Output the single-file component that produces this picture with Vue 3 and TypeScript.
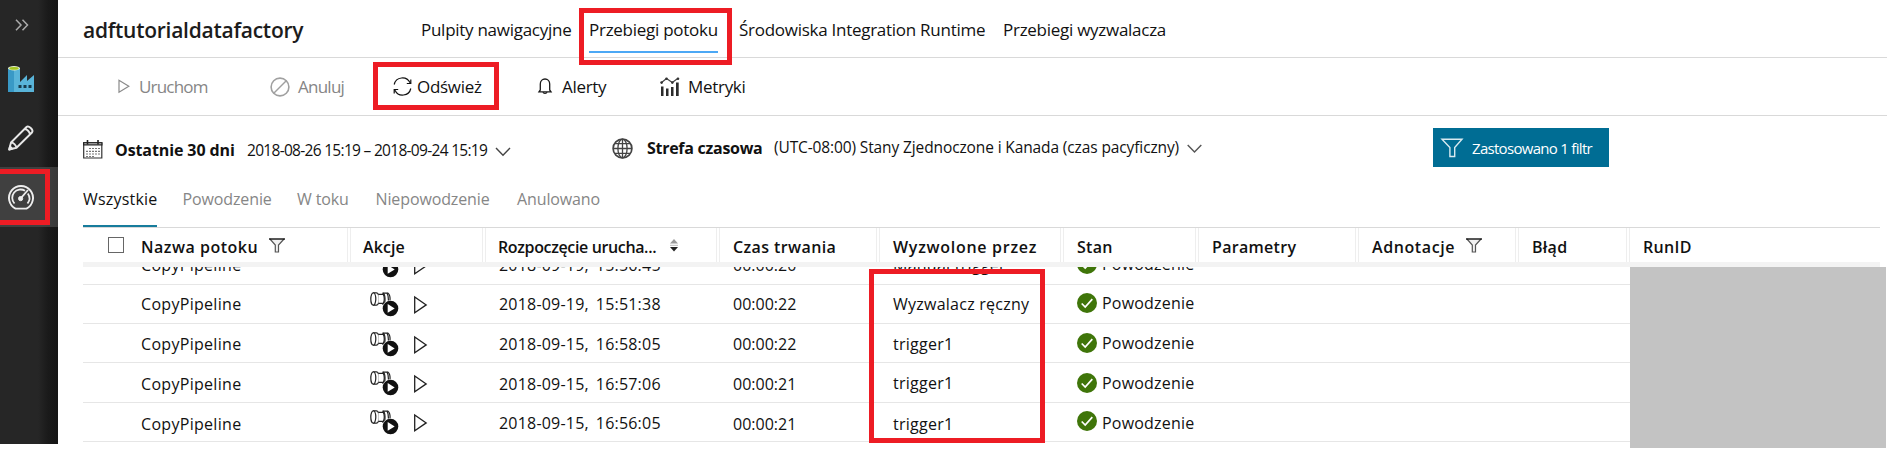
<script setup lang="ts">
interface Column { key: string; label: string; filter?: boolean; sort?: boolean }
interface Run { id: number; date: string; time: string; duration: string; trigger: string }

const navItems = [
  { key: 'dash', label: 'Pulpity nawigacyjne' },
  { key: 'runs', label: 'Przebiegi potoku' },
  { key: 'env', label: 'Środowiska Integration Runtime' },
  { key: 'trig', label: 'Przebiegi wyzwalacza' },
]
const tabs = [
  { key: 'all', label: 'Wszystkie' },
  { key: 'ok', label: 'Powodzenie' },
  { key: 'progress', label: 'W toku' },
  { key: 'failed', label: 'Niepowodzenie' },
  { key: 'cancelled', label: 'Anulowano' },
]
const columns: Column[] = [
  { key: 'name', label: 'Nazwa potoku', filter: true },
  { key: 'actions', label: 'Akcje' },
  { key: 'start', label: 'Rozpoczęcie urucha...', sort: true },
  { key: 'duration', label: 'Czas trwania' },
  { key: 'trigger', label: 'Wyzwolone przez' },
  { key: 'state', label: 'Stan' },
  { key: 'params', label: 'Parametry' },
  { key: 'notes', label: 'Adnotacje', filter: true },
  { key: 'error', label: 'Błąd' },
  { key: 'runid', label: 'RunID' },
]
const runs: Run[] = [
  { id: 0, date: '2018-09-19,', time: '15:56:45', duration: '00:00:20', trigger: 'Manual trigger' },
  { id: 1, date: '2018-09-19,', time: '15:51:38', duration: '00:00:22', trigger: 'Wyzwalacz ręczny' },
  { id: 2, date: '2018-09-15,', time: '16:58:05', duration: '00:00:22', trigger: 'trigger1' },
  { id: 3, date: '2018-09-15,', time: '16:57:06', duration: '00:00:21', trigger: 'trigger1' },
  { id: 4, date: '2018-09-15,', time: '16:56:05', duration: '00:00:21', trigger: 'trigger1' },
]
</script>

<template>
  <div class="app">
    <aside class="sidebar">
      <div class="side-item expand">
        <svg width="14" height="12" viewBox="0 0 14 12"><path d="M1 .8 6 6l-5 5.2M7.500 .8l5 5.200-5 5.200" fill="none" stroke="#aaa" stroke-width="1.500" /></svg>
      </div>
      <div class="side-item factory">
        <svg width="26" height="26" viewBox="0 0 26 26">
          <path d="M0 2h12v24H0z" fill="#3999c6" />
          <path d="M6 2h6v14l7-7v6l7-6v17H6z" fill="#59b4d9" />
          <ellipse cx="6" cy="2.200" rx="6" ry="2.200" fill="#e8f2d0" />
          <ellipse cx="6" cy="2.400" rx="4.700" ry="1.400" fill="#a3c520" />
          <path d="M10.500 19h3v3h-3zM15.500 19h3v3h-3zM20.500 19h3v3h-3z" fill="#173a4c" />
        </svg>
      </div>
      <div class="side-item pencil">
        <svg width="26" height="26" viewBox="0 0 26 26" fill="none" stroke="#e8e8e8" stroke-width="1.900" stroke-linejoin="round">
          <path d="M1.200 24.500 3 17.500 18.500 2c2-2 7.500 2.800 5.500 5.500L8.500 22.800zM3 17.500c2.500 0 5 2.500 5.500 5.300M16.500 4c2.500 0 5.200 2.800 5.500 5.300" />
          <path d="M1.200 24.500l.8-3 2.200 2.200z" fill="#e8e8e8" />
        </svg>
      </div>
      <div class="side-item gauge">
        <svg width="26" height="25" viewBox="0 0 26 25" fill="none" stroke="#eee">
          <path d="M7.500 23.600a12 12 0 1 1 11 0z" stroke-width="1.900" stroke-linejoin="round" />
          <path d="M6.500 18.500a8.300 8.300 0 0 1 10.500-12.700M19.800 8.500a8.300 8.300 0 0 1-.3 10" stroke-width="1.800" />
          <path d="M12 14.200 20 5" stroke-width="1.800" />
          <circle cx="12.600" cy="13.600" r="2.100" fill="#eee" />
        </svg>
      </div>
      <i class="mark mark-side" />
    </aside>

    <main class="main">
      <header class="topbar">
        <h1 class="title">adftutorialdatafactory</h1>
        <nav class="nav">
          <a v-for="n in navItems" :key="n.key" :class="['nav-item', n.key]"><span>{{ n.label }}</span></a>
        </nav>
        <i class="mark mark-nav" />
      </header>

      <div class="toolbar">
        <div class="tool run off">
          <svg width="12" height="15" viewBox="0 0 12 15"><path d="M1 1.200v12l9.800-6z" fill="none" stroke="#8a8a8a" stroke-width="1.200" /></svg>
          <span>Uruchom</span>
        </div>
        <div class="tool cancel off">
          <svg width="20" height="20" viewBox="0 0 20 20"><path d="M3.500 16.500l13-13" stroke="#a0a0a0" stroke-width="1.500" /><circle cx="10" cy="10" r="8.900" fill="none" stroke="#a0a0a0" stroke-width="1.600" /></svg>
          <span>Anuluj</span>
        </div>
        <div class="tool refresh">
          <svg width="19" height="19" viewBox="0 0 19 19" fill="none" stroke="#111" stroke-width="1.200"><path d="M1.200 7.500A8.400 8.400 0 0 1 17 5.800M17.800 2.500v4H13.800M17.800 11.500A8.400 8.400 0 0 1 2 13.200M1.200 16.500v-4H5.200" /></svg>
          <span>Odśwież</span>
        </div>
        <div class="tool alerts">
          <svg width="14" height="17" viewBox="0 0 14 17" fill="none" stroke="#1a1a1a" stroke-width="1.300"><path d="M2.300 12V6c0-3 2-5 4.700-5s4.700 2 4.700 5v6l1.300 1.800H1z" /><path d="M5 14.300c.5 1.400 3.500 1.400 4 0" /></svg>
          <span>Alerty</span>
        </div>
        <div class="tool metrics">
          <svg width="20" height="19" viewBox="0 0 20 19"><path d="M1 9.500h2.500V19H1zM6 11.500h2.500V19H6zM11 10h2.500v9H11zM16 5.500h2.700V19H16z" fill="#2b2b2b" /><path d="M1 6l5.500-4.500 5.800 4L18 1.300" fill="none" stroke="#444" stroke-width="1.200" /><g fill="#333"><circle cx="1.600" cy="5.600" r="1.300" /><circle cx="6.500" cy="1.700" r="1.300" /><circle cx="12.300" cy="5.600" r="1.300" /><circle cx="18" cy="1.700" r="1.300" /></g></svg>
          <span>Metryki</span>
        </div>
        <i class="mark mark-refresh" />
      </div>

      <div class="filters">
        <svg class="calendar" width="20" height="19" viewBox="0 0 20 19">
          <path d="M.7 2.800h18.100V18H.7z" fill="#fff" stroke="#333" stroke-width="1.200" />
          <path d="M0 2.200h19.500v3.300H0z" fill="#222" /><path d="M1.300 3.300h17v1h-17z" fill="#ccc" />
          <path d="M4.500 0v4.500M15 0v4.500" stroke="#222" stroke-width="1.600" />
          <path d="M6 8.500h12M3 11.300h15M3 14h15M3 16.500h9" stroke="#777" stroke-width="1.200" stroke-dasharray="2 1" />
        </svg>
        <strong class="range">Ostatnie 30 dni</strong>
        <span class="dates">2018-08-26 15:19 – 2018-09-24 15:19</span>
        <svg class="chev chev-a" width="16" height="10" viewBox="0 0 16 10"><path d="M1 1l7 7.300L15 1" fill="none" stroke="#444" stroke-width="1.400" /></svg>
        <svg class="globe" width="21" height="21" viewBox="0 0 21 21" fill="none" stroke="#444" stroke-width="1.300"><circle cx="10.500" cy="10.500" r="9.400" stroke-width="1.700" /><ellipse cx="10.500" cy="10.500" rx="4.600" ry="9.400" /><path d="M10.500 1v19M1 10.500h19M2.500 5.700h16M2.500 15.300h16" /></svg>
        <strong class="zone">Strefa czasowa</strong>
        <span class="zone-name">(UTC-08:00) Stany Zjednoczone i Kanada (czas pacyficzny)</span>
        <svg class="chev chev-b" width="15" height="10" viewBox="0 0 15 10"><path d="M.7 1l6.800 7L14.300 1" fill="none" stroke="#555" stroke-width="1.400" /></svg>
        <button class="filter-btn">
          <svg width="22" height="20" viewBox="0 0 22 20"><path d="M1 1.300h20l-7.300 8.200v9H8.900v-9z" fill="none" stroke="#d9eaf0" stroke-width="1.400" /></svg>
          <span>Zastosowano 1 filtr</span>
        </button>
      </div>

      <div class="tabs">
        <div v-for="t in tabs" :key="t.key" :class="['tab', t.key]"><span>{{ t.label }}</span></div>
      </div>

      <section class="table">
        <div class="grid head">
          <i class="checkbox" />
          <div v-for="c in columns" :key="c.key" :class="['th', c.key]">
            <span>{{ c.label }}</span>
            <svg v-if="c.filter" class="funnel" width="16" height="15" viewBox="0 0 16 15"><path d="M1 1l5.300 6v7h3.200V7L15 1" fill="#ddd" fill-opacity=".4" stroke="#555" stroke-width="1.200" /><path d="M0 1h16" stroke="#111" stroke-width="1.400" /></svg>
            <svg v-if="c.sort" class="sort" width="8" height="13" viewBox="0 0 8 13"><path d="M4 0l4 4.500H0z" fill="#999" /><path d="M0 5.800h8v1H0z" fill="#bbb" /><path d="M4 12.500L0 8h8z" fill="#222" /></svg>
          </div>
        </div>
        <div class="body">
          <div class="rows">
            <div v-for="r in runs" :key="r.id" :class="['grid', 'row', `row-${r.id}`]">
              <div class="td name">CopyPipeline</div>
              <div class="td actions">
                <svg width="58" height="25" viewBox="0 0 58 25">
                  <g fill="#fff" stroke="#222" stroke-width="1.200">
                    <path d="M15 1.200h3c1.500 1 2.300 4 2 7.500v3.800H13V1.200z" />
                    <path d="M3 .8h3.500c3.200 0 3.200 12.300 0 12.300H3" />
                    <ellipse cx="3.300" cy="7" rx="2.500" ry="6.200" />
                    <path d="M8.300 2.400h5c1.300 2 1.300 7 0 9h-5" />
                    <path d="M13 1c2.500 1 2.700 10 .5 12M17 1c1.200 2 1.600 5 1.500 8" fill="none" />
                  </g>
                  <circle cx="20.500" cy="16.500" r="8.300" fill="#fff" /><circle cx="20.500" cy="16.500" r="7.800" fill="#111" />
                  <path d="M17.700 12.100v8.600l7-4.300z" fill="#fff" />
                  <path d="M44.700 5v15.800l11.500-7.900z" fill="none" stroke="#222" stroke-width="1.300" />
                </svg>
              </div>
              <div class="td start"><span>{{ r.date }}</span><span>{{ r.time }}</span></div>
              <div class="td duration">{{ r.duration }}</div>
              <div class="td trigger">{{ r.trigger }}</div>
              <div class="td status">
                <svg width="20" height="20" viewBox="0 0 20 20"><circle cx="10" cy="10" r="10" fill="#3f7509" /><path d="M4.700 10.500l3.500 3.600 7.100-8" fill="none" stroke="#fff" stroke-width="1.700" /></svg>
                <span>Powodzenie</span>
              </div>
            </div>
          </div>
          <div class="redacted" />
          <i class="mark mark-trigger" />
        </div>
      </section>
    </main>
  </div>
</template>

<style>
body { margin: 0; background: #fff; overflow: hidden; }
</style>

<style scoped>
* { box-sizing: border-box; }
.app { display: flex; width: 1887px; height: 451px; background: #fff; color: #111; font: 16px/24px "Open Sans", "Noto Sans", sans-serif; white-space: nowrap; overflow: hidden; }
svg { display: block; flex: none; overflow: visible; }

.sidebar { position: relative; width: 58px; height: 444px; flex: none; background: linear-gradient(90deg, #262626 38px, #1a1a1a 48px, #151515 58px); }
.side-item { display: flex; align-items: center; padding-left: 8px; }
.expand { height: 50px; padding-left: 15px; }
.factory { height: 58px; }
.pencil { height: 59px; padding-top: 1px; }
.gauge { height: 60px; background: linear-gradient(90deg, #404040 44px, #383838); }

.mark { position: absolute; border: 5px solid #ed1c24; pointer-events: none; }
.mark-side { left: 0; top: 169px; width: 50px; height: 56px; border-left: 0; }
.mark-nav { left: 521px; top: 8px; width: 153px; height: 57px; z-index: 2; }
.mark-refresh { left: 315px; top: 4px; width: 126px; height: 48px; }
.mark-trigger { left: 786px; top: 2px; width: 176px; height: 174px; }

.main { flex: 1; min-width: 0; }
.topbar { position: relative; display: flex; height: 58px; padding: 2px 0 0 25px; border-bottom: 1px solid #d9d9d9; }
.title { margin: 0; width: 338px; padding-top: 12px; font-size: 21px; line-height: 33px; font-weight: 600; letter-spacing: -.26px; color: #1c1c1c; }
.nav { display: grid; grid-template-columns: 168px 150px 264px 200px; font-size: 17px; line-height: 24px; letter-spacing: -.27px; }
.nav-item { padding-top: 16px; }
.nav-item span { display: inline-block; height: 35px; }
.nav-item.runs span { border-bottom: 2px solid #4ba8f5; width: 129px; }

.toolbar { position: relative; display: grid; grid-template-columns: 152px 123px 144px 122px 140px; height: 58px; padding: 0 0 0 60px; align-items: center; border-bottom: 1px solid #d9d9d9; font-size: 17px; letter-spacing: -.3px; }
.tool { display: flex; align-items: center; }
.off { color: #868686; }
.run { letter-spacing: -.8px; }
.run span { margin-left: 9px; }
.cancel { letter-spacing: -.75px; }
.cancel span { margin-left: 8px; }
.refresh span { margin-left: 5px; }
.alerts { padding-left: 1px; }
.alerts span { margin-left: 10px; }
.metrics { padding-left: 1px; }
.metrics span { margin-left: 8px; }

.filters { display: flex; height: 62px; padding-left: 25px; align-items: center; }
.calendar { margin-top: 4px; }
.range { width: 132px; margin-left: 12px; padding-top: 6px; letter-spacing: -.1px; }
.dates { width: 246px; padding-top: 6px; font-size: 15.500px; letter-spacing: -.7px; }
.chev-a { margin: 10px 101px 0 2px; }
.globe { margin-top: 2px; }
.zone { width: 127px; margin-left: 14px; padding-top: 2px; letter-spacing: -.28px; }
.zone-name { width: 410px; font-size: 15.500px; letter-spacing: -.12px; }
.chev-b { margin: 3px 231px 0 3px; }
.filter-btn { display: flex; align-items: center; width: 176px; height: 39px; margin-top: 1px; padding: 0 0 0 8px; border: 0; background: #006d94; color: #fff; font: 15px/20px "Open Sans", sans-serif; letter-spacing: -.7px; white-space: nowrap; }
.filter-btn span { margin-left: 9px; }

.tabs { display: grid; grid-template-columns: 74px 88px 54px 116px 90px; column-gap: 25.500px; height: 49px; margin-left: 25px; color: #868686; letter-spacing: -.12px; }
.tab { height: 49px; padding-top: 9px; }
.tab.all { color: #111; border-bottom: 2px solid #177c9c; letter-spacing: .2px; }
.tab.progress { padding-left: 1px; }

.table { margin-left: 25px; width: 1797px; }
.grid { display: grid; grid-template-columns: 268px 135px 234px 160px 184px 135px 160px 160px 111px 250px; }
.head { position: relative; height: 40px; border-top: 1px solid #d9d9d9; border-bottom: 5px solid #f3f3f3; font-weight: 600; }
.checkbox { position: absolute; left: 25px; top: 9px; width: 16px; height: 16px; border: 1px solid #666; }
.th { display: flex; align-items: center; padding: 4px 0 0 13px; border-right: 4px double #eee; letter-spacing: .3px; }
.th.name { padding-left: 58px; letter-spacing: .5px; }
.th.actions { padding-left: 12px; letter-spacing: .1px; }
.th.start { padding-left: 12px; letter-spacing: -.36px; }
.th.duration { letter-spacing: .4px; }
.th.trigger { letter-spacing: .72px; }
.th.notes { letter-spacing: .6px; }
.th.runid { border-right: 0; }
.funnel { margin: -4px 0 0 11px; }
.sort { margin: -4px 0 0 14px; }

.body { position: relative; height: 184px; }
.rows { height: 175px; display: flex; flex-direction: column; justify-content: flex-end; overflow: hidden; }
.row { height: 39px; flex: none; width: 1547px; border-bottom: 1px solid #e6e6e6; grid-template-columns: 264px 135px 234px 160px 185px 200px; }
.row-3 { height: 40px; }
.td { display: flex; align-items: flex-start; padding: 7px 0 0 16px; }
.row-2 .td { padding-top: 8px; }
.row-3 .td, .row-4 .td { padding-top: 9px; }
.td.name { padding-left: 58px; letter-spacing: .3px; }
.td.actions { padding: 7px 0 0 23px; }
.row-2 .td.actions, .row-3 .td.actions { padding-top: 8px; }
.td.start { padding-left: 17px; gap: 7px; letter-spacing: .2px; }
.row-4 .td.start { padding-top: 8px; }
.td.duration { padding-left: 17px; }
.td.trigger { padding-left: 17px; letter-spacing: .25px; }
.row-3 .td.trigger { padding-top: 8px; }
.td.status { padding-top: 6px; letter-spacing: .2px; }
.status svg { margin-top: 2px; }
.status span { margin-left: 5px; }
.row-2 .td.status { padding-top: 7px; }
.row-3 .td.status, .row-4 .td.status { padding-top: 8px; }
.row-4 .status svg { margin-top: 0; }
.redacted { position: absolute; left: 1547px; top: 0; width: 256px; height: 181px; background: #c3c3c3; }
</style>
